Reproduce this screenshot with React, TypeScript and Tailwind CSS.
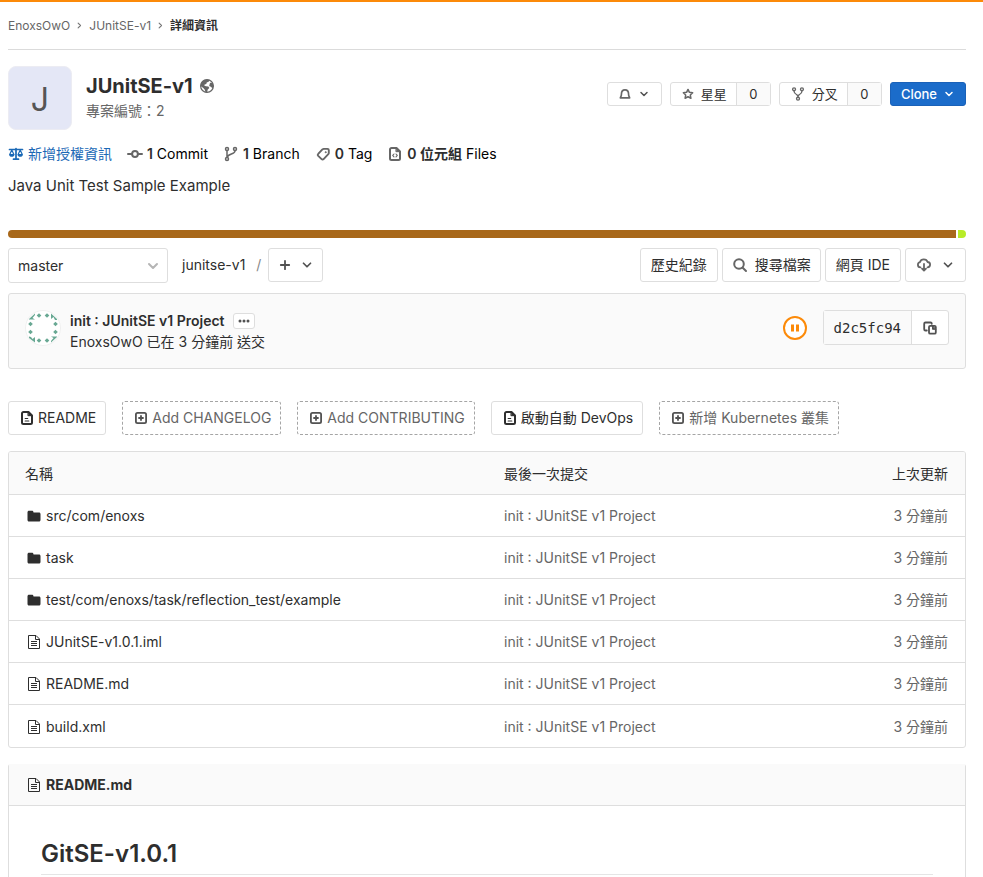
import type { ReactNode } from 'react';

type IconProps = { className?: string };

function Stroke({ className = '', width = 2, children }: IconProps & { width?: number; children: ReactNode }) {
  return (
    <svg viewBox="0 0 16 16" aria-hidden="true" fill="none" stroke="currentColor" strokeWidth={width} strokeLinecap="round" strokeLinejoin="round" className={`shrink-0 ${className}`}>
      {children}
    </svg>
  );
}

const Chevron = ({ className = 'size-3 text-[#525252]' }: IconProps) => (
  <Stroke className={className}><path d="M4 6l4 4 4-4" /></Stroke>
);

const Crumb = () => (
  <Stroke className="mx-1 size-[11px] text-[#777]" width={1.6}><path d="M6 4.500L9.500 8 6 11.500" /></Stroke>
);

const Globe = () => (
  <svg viewBox="0 0 16 16" aria-hidden="true" className="size-4 shrink-0 text-[#666]">
    <circle cx="8" cy="8" r="6.400" fill="none" stroke="currentColor" strokeWidth="1.200" />
    <path fill="currentColor" d="M1.500 8C1.500 4.500 4.500 1.500 8 1.500c1.200 0 2 .2 2.800.6L9.600 3.800l-1.900.6-.4 1.500-1.700.6-.2 1.200 1.700.5 2.300.4.900 1.500-1.700 1.700-.4 2.700-1.500.3-.9-3-1.500-1.700zM11 4.800l2.800.2.700 3-.8 2.500-1.900-1.700-1.600-.9z" />
  </svg>
);

const Bell = () => (
  <Stroke className="size-3 text-[#666]" width={2.200}>
    <path d="M1.800 13.200h12.400c0-1.200-1.400-2-1.400-4.700C12.800 4.800 11 2.500 8 2.500S3.200 4.800 3.200 8.500c0 2.700-1.400 3.500-1.400 4.700z" />
  </Stroke>
);

const Star = () => (
  <Stroke className="size-3 text-[#666]" width={2}>
    <path d="M8 1.900l1.900 3.900 4.300.6-3.100 3 .8 4.300L8 11.700l-3.900 2 .8-4.300-3.100-3 4.300-.6z" />
  </Stroke>
);

const Fork = () => (
  <Stroke className="size-3.5 text-[#666]" width={1.500}>
    <circle cx="3.500" cy="2.600" r="1.700" /><circle cx="12.500" cy="2.600" r="1.700" /><circle cx="8" cy="13.400" r="1.700" />
    <path d="M3.500 4.500c0 3 1.500 3.500 3 4.200.9.500 1.500 1.200 1.500 2.600M12.500 4.500c0 3-1.500 3.500-3 4.200-.9.500-1.500 1.200-1.500 2.600" />
  </Stroke>
);

const Scale = () => (
  <Stroke className="size-4" width={1.700}>
    <path d="M1.500 3.500h13M8 2.500v10M5.500 13.200h5" />
    <path d="M3.800 4L1.700 8.600h4.200zM12.200 4l-2.100 4.600h4.200z" strokeWidth="1.200" />
    <path d="M1.200 8.500h5.200c0 1.500-1.100 2.300-2.600 2.300S1.200 10 1.200 8.500zM9.600 8.500h5.200c0 1.500-1.100 2.300-2.600 2.300s-2.600-.8-2.600-2.300z" fill="currentColor" stroke="none" />
  </Stroke>
);

const Commit = () => (
  <Stroke className="size-4 text-[#666]"><circle cx="8" cy="8" r="2.900" /><path d="M1 8h4M11 8h4" /></Stroke>
);

const Branch = () => (
  <Stroke className="size-4 text-[#666]" width={1.500}>
    <circle cx="4" cy="3" r="1.500" /><circle cx="4" cy="13" r="1.500" /><circle cx="12" cy="3" r="1.500" />
    <path d="M4 5v6M12 5c0 3.500-7 2.500-7.500 6" />
  </Stroke>
);

const Tag = () => (
  <Stroke className="size-4 text-[#666]" width={1.900}>
    <path d="M8.700 2.900h3.800c.8 0 1.300.5 1.300 1.300V7c0 .5-.2.900-.5 1.200l-4.700 4.900c-.6.600-1.400.6-2 0L3.200 9.900c-.6-.6-.6-1.400 0-2l4.200-4.500c.4-.3.800-.5 1.300-.5z" />
    <circle cx="10.600" cy="6.200" r=".5" strokeWidth="1" />
  </Stroke>
);

const CodeDoc = () => (
  <Stroke className="size-4 text-[#666]" width={2}>
    <path d="M9.500 2H4.500C3.700 2 3 2.700 3 3.500v9c0 .8.700 1.500 1.500 1.500h7c.8 0 1.500-.7 1.500-1.500v-7z" />
    <path d="M9.300 2l3.700 3.700H9.300z" fill="currentColor" strokeWidth="1" />
    <path d="M7 8L5.700 9.400 7 10.800M9 8l1.300 1.400L9 10.800" strokeWidth="1.100" />
  </Stroke>
);

const Doc = () => (
  <Stroke className="size-4" width={2}>
    <path d="M9.500 2H4.500C3.700 2 3 2.700 3 3.500v9c0 .8.700 1.500 1.500 1.500h7c.8 0 1.500-.7 1.500-1.500v-7z" />
    <path d="M9.300 2l3.700 3.700H9.300z" fill="currentColor" strokeWidth="1" />
    <path d="M6.200 8.500h2.500M6.200 11h3.600" strokeWidth="1.200" />
  </Stroke>
);

const PlusSquare = () => (
  <Stroke className="size-4 text-[#525252]" width={1.800}>
    <rect x="2.900" y="2.900" width="10.200" height="10.200" rx="1.600" /><path d="M8 6v4M6 8h4" />
  </Stroke>
);

const Plus = () => <Stroke className="size-4 text-[#525252]" width={1.800}><path d="M8 3.800v8.400M3.800 8h8.400" /></Stroke>;

const Search = () => (
  <Stroke className="size-4 text-[#666]"><circle cx="7" cy="7" r="4.800" /><path d="M10.700 10.700l3.300 3.300" /></Stroke>
);

const Cloud = () => (
  <Stroke className="size-4 text-[#666]" width={1.800}>
    <path d="M4.500 10.300C2.800 10.300 1.900 9 1.900 7.700c0-1.300.9-2.300 2.100-2.600C4.500 3.200 6 2.300 7.800 2.300c1.900 0 3.300 1 3.800 2.700 1.500.1 2.500 1.200 2.500 2.600 0 1.500-1.100 2.700-2.600 2.700" />
    <path d="M8 7v6.500M6 11.700l2 2 2-2" />
  </Stroke>
);

const Copy = () => (
  <Stroke className="size-4 text-[#525252]" width={1.800}>
    <path d="M4.800 10.500H3.500c-.8 0-1.300-.5-1.300-1.300V3.800c0-.8.500-1.300 1.300-1.300h5c.8 0 1.300.5 1.300 1.300" />
    <rect x="7" y="5.800" width="6.800" height="7.900" rx="1.300" /><path d="M10.500 6v3.300h3z" fill="currentColor" strokeWidth="1" />
  </Stroke>
);

const Folder = () => (
  <svg viewBox="0 0 16 16" aria-hidden="true" fill="currentColor" className="size-4 shrink-0">
    <path d="M1.500 4.200c0-.9.600-1.500 1.500-1.500h3c.9 0 1.500.6 1.500 1.500v.3H13c.9 0 1.500.6 1.500 1.500v6c0 .9-.6 1.500-1.500 1.500H3c-.9 0-1.500-.6-1.500-1.500z" />
  </svg>
);

const TextFile = () => (
  <svg viewBox="0 0 16 16" aria-hidden="true" fill="none" stroke="currentColor" className="size-4 shrink-0">
    <path d="M2.500 1.500h7.500l3.500 3.500v9.500h-11zM9.500 1.500v4h4M5 7.500h6M5 9.500h6M5 11.500h6" />
  </svg>
);

const Identicon = () => (
  <svg viewBox="0 0 36 36" aria-hidden="true" className="size-9 shrink-0">
    <circle cx="18" cy="18" r="17.500" fill="#fff" stroke="#f0f0f0" />
    <g fill="#68a893">
      {[[14, 5.500], [22, 5.500], [14, 30.500], [22, 30.500], [5.500, 14], [5.500, 22], [30.500, 14], [30.500, 22]].map(([x, y]) => (
        <path key={`${x}-${y}`} d={`M${x} ${y - 2.300}l2.300 2.300-2.300 2.300-2.300-2.300z`} />
      ))}
      <path d="M4 9l6-5.500v1.500L7.500 8 10 9.500H4zM26 3.500L32 9v1h-2l-1.500-3L26 9zM32 27l-6 5.500V31l2.500-3-2.500-1.500h6zM4 26.500l2 .5 1.500 2L10 27v5.500L4 28z" />
    </g>
  </svg>
);

const box = 'rounded-[3px] border border-[#dedede] bg-white';
const button = `flex items-center ${box}`;
const dashed = 'flex h-[34px] items-center gap-[3px] rounded-[3px] border border-dashed border-[#a5a5a5] pr-[9px] pl-2.5 text-[#666]';
const action = `${button} h-[34px] gap-[3px] pr-[9px] pl-2.5`;
const solid = `${button} h-[34px] px-2.5`;

const files = [
  { name: 'src/com/enoxs', folder: true },
  { name: 'task', folder: true },
  { name: 'test/com/enoxs/task/reflection_test/example', folder: true },
  { name: 'JUnitSE-v1.0.1.iml', folder: false },
  { name: 'README.md', folder: false },
  { name: 'build.xml', folder: false },
];

function Counter({ icon, label }: { icon: ReactNode; label: string }) {
  return (
    <div className={`flex h-6 items-stretch text-[13px] ${box}`}>
      <button className="flex items-center gap-[7px] pr-[9px] pl-[11px]">{icon}{label}</button>
      <a href="#" aria-label={`${label} 0`} className="flex w-[34px] items-center justify-center border-l border-[#dedede] bg-[#fafafa]">0</a>
    </div>
  );
}

export default function App() {
  return (
    <div className="border-t-2 border-[#fc8a09] bg-white pr-[17px] pl-2 font-['Inter','Noto_Sans_CJK_TC',sans-serif] text-sm leading-5 text-[#2e2e2e]">
      <nav aria-label="Breadcrumb" className="flex h-12 items-center border-b border-[#dbdbdb] text-xs text-[#666]">
        <a href="#">EnoxsOwO</a>
        <Crumb />
        <a href="#">JUnitSE-v1</a>
        <Crumb />
        <a href="#" className="font-bold text-[#2e2e2e]">詳細資訊</a>
      </nav>

      <header className="mt-4 flex items-center">
        <div className="flex size-16 items-center justify-center rounded-lg border border-[#ececf3] bg-[#e4e7f6] pt-[3px] text-[32px] text-[#555]">J</div>
        <div className="ml-3.5 pt-0.5">
          <h1 className="flex items-center gap-1.5 text-xl leading-6 font-bold">JUnitSE-v1 <Globe /></h1>
          <p className="leading-[26px] text-[#666]">專案編號：2</p>
        </div>
        <div className="mb-2 ml-auto flex items-center gap-2">
          <button aria-label="通知設定" className={`${button} h-6 gap-[7px] px-[11px]`}><Bell /><Chevron /></button>
          <Counter icon={<Star />} label="星星" />
          <Counter icon={<Fork />} label="分叉" />
          <button className="flex h-6 items-center gap-1.5 rounded-[3px] border border-[#1a61b8] bg-[#1b6cca] px-2.5 text-[13px] font-medium text-white">
            Clone <Chevron className="size-3" />
          </button>
        </div>
      </header>

      <nav aria-label="專案統計" className="mt-3.5 flex items-center gap-[15px] text-black">
        <a href="#" className="flex items-center gap-1 text-[#1b69b6]"><Scale />新增授權資訊</a>
        <a href="#" className="flex items-center gap-1"><Commit /><span><strong className="font-semibold text-[#2e2e2e]">1</strong> Commit</span></a>
        <a href="#" className="flex items-center gap-1"><Branch /><span><strong className="font-semibold text-[#2e2e2e]">1</strong> Branch</span></a>
        <a href="#" className="flex items-center gap-1"><Tag /><span><strong className="font-semibold text-[#2e2e2e]">0</strong> Tag</span></a>
        <a href="#" className="flex items-center gap-1"><CodeDoc /><span><strong className="font-semibold text-[#2e2e2e]">0 位元組</strong> Files</span></a>
      </nav>
      <p className="mt-2.5 text-[15px] leading-6">Java Unit Test Sample Example</p>

      <div className="mt-8 flex h-2 gap-0.5 overflow-hidden rounded-full">
        <div className="grow bg-[#a8681a]" />
        <div className="w-2 bg-[#b8ec28]" />
      </div>

      <div className="mt-2.5 flex h-[35px] items-start gap-1">
        <div className="relative w-40">
          <select aria-label="切換分支" className={`h-[35px] w-full appearance-none pl-[9px] ${box}`}><option>master</option></select>
          <Chevron className="pointer-events-none absolute top-2.5 right-[7px] size-4 text-[#b5b5b5]" />
        </div>
        <div className="ml-2.5 flex h-[34px] items-center">
          <a href="#">junitse-v1</a><span className="mr-[7px] ml-[11px] text-[#888]">/</span>
          <button aria-label="新增" className={`${button} h-[34px] gap-[7px] px-2`}><Plus /><Chevron className="size-3.5 text-[#525252]" /></button>
        </div>
        <div className="ml-auto flex gap-1">
          <a href="#" className={solid}>歷史紀錄</a>
          <a href="#" className={`${button} h-[34px] gap-[7px] px-[9px]`}><Search />搜尋檔案</a>
          <a href="#" className={solid}>網頁 IDE</a>
          <button aria-label="下載" className={`${button} h-[34px] gap-[9px] px-2.5`}><Cloud /><Chevron className="size-3.5 text-[#525252]" /></button>
        </div>
      </div>

      <section className="mt-2.5 flex h-[76px] items-start rounded-[3px] border border-[#dedede] bg-[#fafafa] p-4">
        <Identicon />
        <div className="ml-[9px]">
          <div className="flex items-center gap-2 leading-[21px]">
            <a href="#" className="font-semibold">init : JUnitSE v1 Project</a>
            <button aria-label="顯示提交說明" className={`flex h-4 w-[22px] items-center justify-center ${box}`}>
              <svg viewBox="0 0 12 4" aria-hidden="true" className="h-1 w-3" fill="#525252"><circle cx="2" cy="2" r="1.500" /><circle cx="6" cy="2" r="1.500" /><circle cx="10" cy="2" r="1.500" /></svg>
            </button>
          </div>
          <p className="leading-[21px]">EnoxsOwO 已在 3 分鐘前 送交</p>
        </div>
        <a href="#" aria-label="流水線已暫停" className="mt-1.5 ml-auto">
          <svg viewBox="0 0 24 24" aria-hidden="true" className="size-6"><circle cx="12" cy="12" r="11" fill="#fff" stroke="#fc8a09" strokeWidth="2" /><path d="M8 8.500h3v7H8zM13 8.500h3v7h-3z" fill="#fc8a09" /></svg>
        </a>
        <div className={`ml-4 flex h-[35px] items-stretch ${box}`}>
          <span className="flex items-center border-r border-[#dedede] bg-[#fafafa] px-2.5 font-['DejaVu_Sans_Mono',monospace]">d2c5fc94</span>
          <button aria-label="複製提交 SHA" className="flex w-9 items-center justify-center"><Copy /></button>
        </div>
      </section>

      <div className="mt-8 flex gap-4">
        <a href="#" className={action}><Doc />README</a>
        <a href="#" className={dashed}><PlusSquare />Add CHANGELOG</a>
        <a href="#" className={dashed}><PlusSquare />Add CONTRIBUTING</a>
        <a href="#" className={action}><Doc />啟動自動 DevOps</a>
        <a href="#" className={dashed}><PlusSquare />新增 Kubernetes 叢集</a>
      </div>

      <div className="mt-4 overflow-hidden rounded-[3px] border border-[#dedede]">
        <table className="w-full table-fixed text-left">
          <thead>
            <tr className="h-[42px] border-b border-[#dedede] bg-[#fafafa]">
              <th className="w-1/2 px-4 pt-0.5 font-normal">名稱</th>
              <th className="pt-0.5 pl-[17px] font-normal">最後一次提交</th>
              <th className="w-40 pt-0.5 pr-[17px] text-right font-normal">上次更新</th>
            </tr>
          </thead>
          <tbody>
            {files.map((file) => (
              <tr key={file.name} className="h-[42px] border-b border-[#dedede] last:h-[43px] last:border-0">
                <td className="px-4 pt-0.5">
                  <a href="#" className="flex items-center gap-1 pl-px">{file.folder ? <Folder /> : <TextFile />}{file.name}</a>
                </td>
                <td className="pt-0.5 pl-[17px] text-[#666]"><a href="#">init : JUnitSE v1 Project</a></td>
                <td className="pt-0.5 pr-[17px] text-right text-[#666]">3 分鐘前</td>
              </tr>
            ))}
          </tbody>
        </table>
      </div>

      <article className="mt-4 rounded-t-[3px] border-x border-[#dedede]">
        <div className="flex h-[42px] items-center gap-1 border-b border-[#dedede] bg-[#fafafa] px-[17px] font-bold"><TextFile />README.md</div>
        <div className="px-8 pt-[33px] pb-0.5">
          <h2 className="border-b border-[#e5e5e5] pb-[5px] text-2xl leading-[30px] font-semibold">GitSE-v1.0.1</h2>
        </div>
      </article>
    </div>
  );
}
